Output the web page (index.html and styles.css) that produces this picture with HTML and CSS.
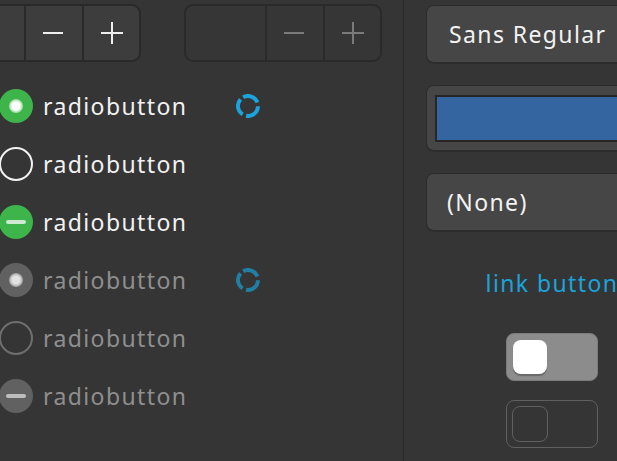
FILE: index.html
```html
<!DOCTYPE html>
<html>
<head>
<meta charset="utf-8">
<link rel="stylesheet" href="styles.css">
</head>
<body>
<div class="window">
  <div class="left">
    <div class="spins">
      <div class="spin first">
        <div class="spin-entry"></div>
        <div class="spin-btn"><svg width="22" height="22" viewBox="0 0 22 22"><rect x="0" y="10" width="20" height="2" fill="currentColor"/></svg></div>
        <div class="spin-btn"><svg width="22" height="22" viewBox="0 0 22 22"><rect x="0" y="10" width="22" height="2" fill="currentColor"/><rect x="10" y="0" width="2" height="22" fill="currentColor"/></svg></div>
      </div>
      <div class="spin disabled">
        <div class="spin-entry"></div>
        <div class="spin-btn"><svg width="22" height="22" viewBox="0 0 22 22"><rect x="0" y="10" width="20" height="2" fill="currentColor"/></svg></div>
        <div class="spin-btn"><svg width="22" height="22" viewBox="0 0 22 22"><rect x="0" y="10" width="22" height="2" fill="currentColor"/><rect x="10" y="0" width="2" height="22" fill="currentColor"/></svg></div>
      </div>
    </div>
    <div class="radios">
      <div class="row">
        <div class="radio-item"><span class="radio checked"></span><span class="label">radiobutton</span></div>
        <svg class="spinner" width="24" height="24" viewBox="0 0 24 24"><circle cx="12" cy="12" r="10" fill="none" stroke="#1aa4dd" stroke-width="4" stroke-dasharray="17.2 3.74" transform="rotate(241 12 12)"/></svg>
      </div>
      <div class="row">
        <div class="radio-item"><span class="radio"></span><span class="label">radiobutton</span></div>
      </div>
      <div class="row">
        <div class="radio-item"><span class="radio mixed"></span><span class="label">radiobutton</span></div>
      </div>
      <div class="row">
        <div class="radio-item insensitive"><span class="radio checked"></span><span class="label">radiobutton</span></div>
        <svg class="spinner" width="24" height="24" viewBox="0 0 24 24"><circle cx="12" cy="12" r="10" fill="none" stroke="#217fa6" stroke-width="4" stroke-dasharray="17.2 3.74" transform="rotate(241 12 12)"/></svg>
      </div>
      <div class="row">
        <div class="radio-item insensitive"><span class="radio"></span><span class="label">radiobutton</span></div>
      </div>
      <div class="row">
        <div class="radio-item insensitive"><span class="radio mixed"></span><span class="label">radiobutton</span></div>
      </div>
    </div>
  </div>
  <div class="sep"></div>
  <div class="right">
    <div class="button font-btn"><span>Sans Regular</span></div>
    <div class="button color-btn"><div class="swatch"></div></div>
    <div class="button combo"><span>(None)</span></div>
    <div class="link">link button</div>
    <div class="switch on"><div class="slider"></div></div>
    <div class="switch off"><div class="slider"></div></div>
  </div>
</div>
</body>
</html>
```

FILE: styles.css
```css
html, body {
  margin: 0;
  padding: 0;
  background: #353535;
  width: 617px;
  height: 461px;
  overflow: hidden;
  font-family: "Noto Sans", "DejaVu Sans", sans-serif;
  color: #f2f2f2;
}

.window {
  display: flex;
  height: 461px;
  overflow: hidden;
}

.left {
  width: 403px;
  flex: none;
}

.sep {
  width: 1px;
  flex: none;
  background: #2a2a2a;
}

.right {
  width: 296px;
  flex: none;
  display: flex;
  flex-direction: column;
  align-items: center;
}

/* spin buttons */
.spins {
  display: flex;
  gap: 43px;
  padding-top: 4px;
  margin-left: -57px;
}

.spin {
  display: flex;
  height: 58px;
  border: 2px solid #2a2a2a;
  border-radius: 9px;
  overflow: hidden;
  box-sizing: border-box;
  background: #3d3d3d;
  color: #eeeeee;
}

.spin-entry {
  width: 79px;
}

.spin-btn {
  display: flex;
  align-items: center;
  justify-content: center;
  border-left: 2px solid #2a2a2a;
  width: 56px;
}

.spin-btn + .spin-btn {
  width: 55px;
}

.spin-btn svg {
  display: block;
}

.spin.disabled {
  background: #363636;
  color: #7a7a7a;
}

/* radios */
.radios {
  margin-top: 15px;
}

.row {
  display: flex;
  align-items: center;
  height: 58px;
}

.radio-item {
  display: flex;
  align-items: center;
  width: 236px;
  flex: none;
}

.radio {
  width: 34px;
  height: 34px;
  border-radius: 50%;
  box-sizing: border-box;
  margin-left: -1px;
  border: 2px solid #f2f2f2;
  position: relative;
  flex: none;
}

.radio.checked,
.radio.mixed {
  border: none;
  background: #3db54a;
}

.radio.checked::after {
  content: "";
  position: absolute;
  left: 10px;
  top: 10px;
  width: 14px;
  height: 14px;
  border-radius: 50%;
  background: radial-gradient(circle, #ffffff 40%, rgba(255,255,255,0.6) 62%, rgba(255,255,255,0) 100%);
}

.radio.mixed::after {
  content: "";
  position: absolute;
  left: 7px;
  top: 15px;
  width: 20px;
  height: 4px;
  border-radius: 2px;
  background: #cfe9d1;
}

.label {
  margin-left: 10px;
  font-size: 23px;
  letter-spacing: 1.4px;
  line-height: 30px;
}

.insensitive .label {
  color: #8f8f8f;
}

.insensitive .radio {
  border: 2px solid #6f6f6f;
}

.insensitive .radio.checked,
.insensitive .radio.mixed {
  border: none;
  background: #616161;
}

.insensitive .radio.checked::after {
  background: radial-gradient(circle, #e2e2e2 40%, rgba(226,226,226,0.6) 62%, rgba(226,226,226,0) 100%);
}

.insensitive .radio.mixed::after {
  background: #bdbdbd;
}

.spinner {
  display: block;
  flex: none;
}

/* right column */
.button {
  box-sizing: border-box;
  width: 252px;
  flex: none;
  border: 1px solid #2c2c2c;
  border-radius: 8px;
  background: #464646;
  box-shadow: 0 1px 1px rgba(0,0,0,0.15);
  display: flex;
  align-items: center;
  font-size: 23px;
  letter-spacing: 1.4px;
}

.font-btn {
  margin-top: 5px;
  height: 58px;
  padding-left: 22px;
}

.color-btn {
  margin-top: 22px;
  height: 66px;
  padding: 9px 0 8px 8px;
  align-items: stretch;
}

.swatch {
  flex: 1;
  background: #3465a0;
  border: 2px solid #262626;
  border-right: none;
}

.combo {
  margin-top: 22px;
  height: 58px;
  padding-left: 20px;
}

.link {
  margin-top: 23px;
  height: 58px;
  display: flex;
  align-items: center;
  font-size: 23px;
  letter-spacing: 1.4px;
  color: #1aa4dd;
  white-space: nowrap;
}

.switch {
  box-sizing: border-box;
  width: 92px;
  height: 48px;
  border-radius: 8px;
  padding: 6px;
  flex: none;
}

.switch.on {
  margin-top: 21px;
  background: #8c8c8c;
  border: 1px solid #7c7c7c;
}

.switch.on .slider {
  width: 34px;
  height: 34px;
  border-radius: 8px;
  background: #ffffff;
  box-shadow: 0 2px 1px rgba(0,0,0,0.25);
}

.switch.off {
  margin-top: 19px;
  border: 1.5px solid #606060;
  padding: 4.5px;
}

.switch.off .slider {
  width: 36px;
  height: 36px;
  box-sizing: border-box;
  border-radius: 8px;
  border: 1.5px solid #606060;
}
```
